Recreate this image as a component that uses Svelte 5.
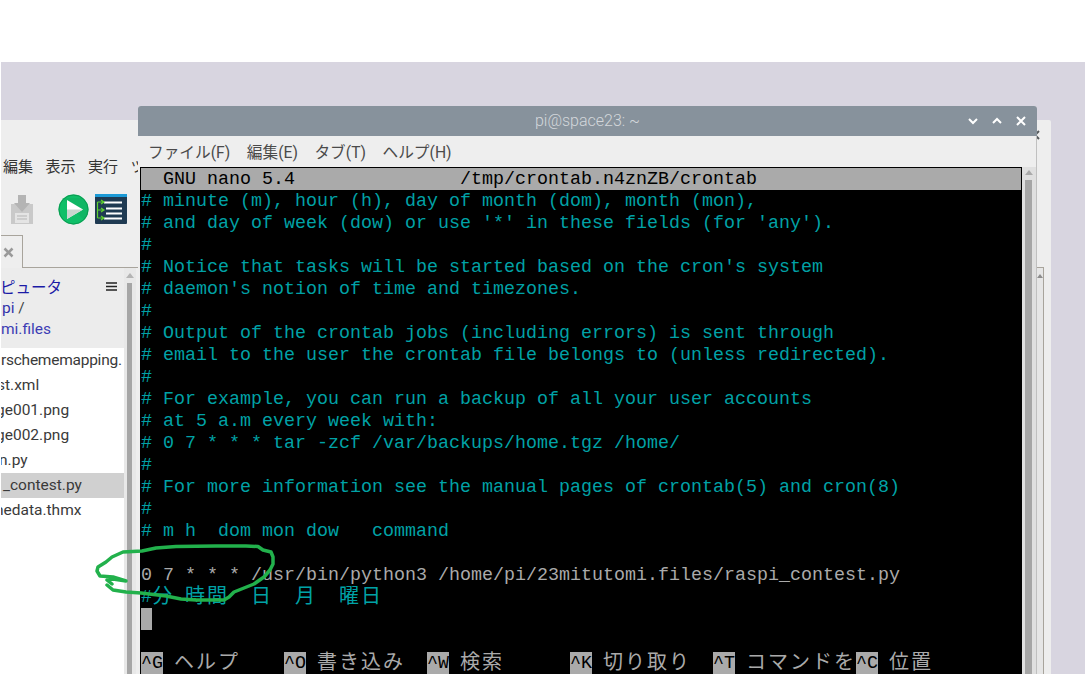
<script>
  const nanoTitle = "  GNU nano 5.4               /tmp/crontab.n4znZB/crontab";
  const comments = [
    "# minute (m), hour (h), day of month (dom), month (mon),",
    "# and day of week (dow) or use '*' in these fields (for 'any').",
    "#",
    "# Notice that tasks will be started based on the cron's system",
    "# daemon's notion of time and timezones.",
    "#",
    "# Output of the crontab jobs (including errors) is sent through",
    "# email to the user the crontab file belongs to (unless redirected).",
    "#",
    "# For example, you can run a backup of all your user accounts",
    "# at 5 a.m every week with:",
    "# 0 7 * * * tar -zcf /var/backups/home.tgz /home/",
    "#",
    "# For more information see the manual pages of crontab(5) and cron(8)",
    "#",
    "# m h  dom mon dow   command"
  ];
  const files = [
    { name: "rschememapping.", sel: false, shift: 0, track: -0.25 },
    { name: "st.xml", sel: false, shift: -4, track: 0 },
    { name: "ge001.png", sel: false, shift: -5, track: 0 },
    { name: "ge002.png", sel: false, shift: -5, track: 0 },
    { name: "n.py", sel: false, shift: -2, track: 0 },
    { name: "_contest.py", sel: true, shift: 2, track: 0 },
    { name: "hedata.thmx", sel: false, shift: -6, track: 0 }
  ];
  const help = [
    { key: "^G", label: "ヘルプ", gap: "    " },
    { key: "^O", label: "書き込み", gap: "  " },
    { key: "^W", label: "検索", gap: "      " },
    { key: "^K", label: "切り取り", gap: "  " },
    { key: "^T", label: "コマンドを", gap: "" },
    { key: "^C", label: "位置", gap: "" }
  ];
</script>

<div class="page">
  <div class="desktop">
    <section class="backwin">
      <svg class="backclose" width="10" height="10" viewBox="0 0 10 10"><path d="M1 1l8 8M9 1l-8 8" fill="none" stroke="#55595c" stroke-width="2"/></svg>
      <nav class="backmenu"><span>編集</span><span>表示</span><span>実行</span><span>ツ</span></nav>
      <div class="tools">
        <svg class="save" width="24" height="31" viewBox="0 0 24 31">
          <path d="M1 10h5v-1l3 3h6l3-3v1h5v20H1z" fill="#c9c9c9"/>
          <path d="M5 19h14v10H5z" fill="#e4e4e4"/>
          <path d="M7 22h10M7 25h10" stroke="#b5b5b5"/>
          <path d="M8 1h8v8h4l-8 9-8-9h4z" fill="#b4b4b4"/>
        </svg>
        <svg class="play" width="31" height="31" viewBox="0 0 31 31">
          <circle cx="15.500" cy="15.500" r="15" fill="#0fbf68"/>
          <path d="M24 4A15 15 0 0 1 26 26L4 4z" fill="#12ad60" opacity=".5"/>
          <circle cx="15.500" cy="15.500" r="14.500" fill="none" stroke="#0a9a50"/>
          <path d="M9 6l16 9.500L9 25z" fill="#fff"/>
          <path d="M9 15.500h16L9 25z" fill="#c9d6cf"/>
        </svg>
        <svg class="code" width="32" height="30" viewBox="0 0 32 30">
          <rect width="32" height="30" rx="1" fill="#1f3a52"/>
          <rect width="32" height="3" fill="#1c9ad6"/>
          <path d="M9 8.500h18M11 14.500h16M11 19.500h16M9 24.500h18" stroke="#fff" stroke-width="2"/>
          <path d="M2.500 8v16M2.500 8h6M2.500 16h6M2.500 24h6M6 6l3 2-3 2M6 14l3 2-3 2M6 22l3 2-3 2" fill="none" stroke="#5fd02f" stroke-width="1.200"/>
        </svg>
      </div>
      <div class="tabs"><div class="tab"><svg width="11" height="11" viewBox="0 0 11 11"><path d="M1.500 1.500l8 8M9.500 1.500l-8 8" fill="none" stroke="#9a9a9a" stroke-width="2.500"/></svg></div></div>
      <div class="panes">
        <div class="sidepane">
          <div class="filelist">
            <header class="path">
              <div class="pathtop">
                <span class="place">ピュータ</span>
                <svg width="11" height="9" viewBox="0 0 11 9"><path d="M0 1h11M0 4.500h11M0 8h11" stroke="#222" stroke-width="1.500"/></svg>
              </div>
              <div class="crumb">pi <span class="slash">/</span></div>
              <div class="crumb folder">mi.files</div>
            </header>
            {#each files as f}
              <div class="file" class:sel={f.sel} style="text-indent: {f.shift}px; letter-spacing: {f.track}px">{f.name}</div>
            {/each}
          </div>
          <div class="sidescroll"><i class="arrow"></i><b class="thumb"></b></div>
        </div>
        <div class="editorpane"></div>
        <div class="farscroll"><i class="fararrow"></i></div>
      </div>
    </section>

    <section class="term">
      <header class="titlebar">
        <span class="title">pi@space23: ~</span>
        <div class="winbtns">
          <svg width="12" height="12" viewBox="0 0 12 12"><path d="M2 4l4 4 4-4" fill="none" stroke="#fff" stroke-width="2"/></svg>
          <svg width="12" height="12" viewBox="0 0 12 12"><path d="M2 8l4-4 4 4" fill="none" stroke="#fff" stroke-width="2"/></svg>
          <svg width="12" height="12" viewBox="0 0 12 12"><path d="M2 2l8 8M10 2l-8 8" fill="none" stroke="#fff" stroke-width="2"/></svg>
        </div>
      </header>
      <nav class="termmenu">
        <span>ファイル(F)</span><span>編集(E)</span><span>タブ(T)</span><span>ヘルプ(H)</span>
      </nav>
      <div class="termbody">
        <div class="screen">
          <div class="row nano">{nanoTitle}</div>
          {#each comments as line}
            <div class="row teal">{line}</div>
          {/each}
          <div class="row"></div>
          <div class="row plain">0 7 * * * /usr/bin/python3 /home/pi/23mitutomi.files/raspi_contest.py</div>
          <div class="row teal">#<span class="wide">分</span>{" "}<span class="wide">時間</span>{"  "}<span class="wide">日</span>{"  "}<span class="wide">月</span>{"  "}<span class="wide">曜日</span></div>
          <div class="row"><span class="cursor"></span></div>
          <div class="row"></div>
          <div class="row light">{#each help as h}<span class="key">{h.key}</span>{" "}<span class="wide">{h.label}</span>{h.gap}{/each}</div>
        </div>
        <div class="termscroll"><i class="arrow"></i><b class="thumb"></b></div>
      </div>
    </section>

    <svg class="scribble" width="300" height="80" viewBox="0 0 300 80">
      <path d="M16 38 L11 34 L17 33 L30 35 L17 31 L4 30 L1 25 L2 21 L10 16 L16 11 L27 6 L46 5 L60 2 L80 0.500 L120 0 L150 0 L162 0.500 L167 4 L175 6 L177 11 L177 18 L174 24 L168 31 L158 38 L148 42 L138 46 L133 51 L128 54 L100 54 L85 53 L70 50 L45 47 L30 46 L17 44 L11 39" transform="translate(0 5)" fill="none" stroke="#22b14c" stroke-width="3.500" stroke-linejoin="round" stroke-linecap="round"/>
    </svg>
  </div>
</div>

<style>
  :global(body) { margin: 0; background: #fff; }
  .page {
    width: 1085px;
    height: 674px;
    padding-top: 62px;
    padding-left: 1px;
    box-sizing: border-box;
    overflow: hidden;
    background: #fff;
  }
  .desktop {
    position: relative;
    width: 1084px;
    height: 612px;
    background: #d8d5e0;
    overflow: hidden;
  }
  .backwin {
    position: absolute;
    left: 0;
    top: 58px;
    width: 1050px;
    height: 560px;
    background: #eeeeee;
    border-top-right-radius: 2px;
    display: flex;
    flex-direction: column;
    font-family: "Noto Sans CJK JP", "Noto Sans", sans-serif;
  }
  .backclose { position: absolute; left: 1029px; top: 10px; }
  .backmenu {
    height: 60px;
    box-sizing: border-box;
    padding: 35px 0 0 2px;
    display: flex;
    gap: 12.500px;
    font-size: 15px;
    line-height: 21px;
    color: #333;
    white-space: nowrap;
  }
  .tools {
    height: 55px;
    box-sizing: border-box;
    display: flex;
    align-items: flex-start;
    padding-top: 14px;
  }
  .save { margin-left: 9px; }
  .play { margin-left: 24px; }
  .code { margin-left: 6px; }
  .tabs { height: 33px; display: flex; flex: none; }
  .tab {
    width: 22px;
    height: 33px;
    box-sizing: border-box;
    border: 1px solid #a8a49c;
    border-left: 0;
    border-bottom: 0;
    background: #eeeeee;
    display: flex;
    align-items: center;
    padding-left: 2px;
    position: relative;
    z-index: 1;
  }
  .panes {
    flex: 1;
    display: flex;
    border-top: 1px solid #a8a49c;
    border-right: 1px solid #a8a49c;
    margin: -1px 7px 0 0;
    min-height: 0;
  }
  .sidepane { width: 135px; display: flex; flex: none; }
  .filelist { width: 123px; background: #fff; overflow: hidden; }
  .path {
    height: 80px;
    box-sizing: border-box;
    background: #ececec;
    padding-top: 6px;
  }
  .pathtop {
    display: flex;
    justify-content: space-between;
    align-items: center;
    padding: 0 7px 0 0;
    height: 24px;
    line-height: 24px;
    font-size: 15.500px;
    color: #1b1ba6;
  }
  .place { margin-left: -1px; }
  .crumb {
    font: 15.500px/21px Roboto, sans-serif;
    color: #3333aa;
    height: 21px;
    padding-left: 1px;
  }
  .slash { color: #444; }
  .crumb.folder { color: #3c3cb4; padding-left: 0; }
  .file {
    height: 25px;
    font: 15.500px/25px Roboto, sans-serif;
    color: #3a3a3a;
    white-space: nowrap;
  }
  .file.sel { background: #d0d0d0; }
  .sidescroll {
    width: 12px;
    background: #e8e8e8;
    padding-left: 3px;
    box-sizing: border-box;
  }
  .sidescroll .arrow {
    display: block;
    width: 0;
    height: 0;
    margin: 5px 0 0 -1px;
    border: 4px solid transparent;
    border-top: 0;
    border-bottom: 5px solid #b4b4b4;
  }
  .sidescroll .thumb { display: block; width: 5px; height: 400px; margin-top: 5px; background: #a6a6a6; }
  .editorpane { flex: 1; }
  .farscroll { width: 7px; background: #e6e6e6; padding: 6px 0 0 1px; box-sizing: border-box; }
  .fararrow {
    display: block;
    width: 0;
    height: 0;
    border: 3px solid transparent;
    border-top: 0;
    border-bottom: 4px solid #8c8c8c;
  }
  .term {
    position: absolute;
    left: 137px;
    top: 44px;
    width: 899px;
    height: 590px;
    background: #eeeeee;
    border-radius: 3px 3px 0 0;
    display: flex;
    flex-direction: column;
    overflow: hidden;
  }
  .titlebar {
    height: 30px;
    flex: none;
    position: relative;
    background: #87929c;
    text-align: center;
    font: 300 16px/30px Roboto, "Liberation Sans", sans-serif;
    color: #d3d7db;
  }
  .winbtns {
    position: absolute;
    right: 10px;
    top: 9px;
    display: flex;
    gap: 12px;
  }
  .winbtns svg { display: block; }
  .termmenu {
    height: 31px;
    flex: none;
    box-sizing: border-box;
    padding: 2px 0 0 10px;
    border-right: 1px solid #c0c0c0;
    display: flex;
    gap: 16.500px;
    align-items: center;
    font: 15.700px/29px Roboto, "Noto Sans CJK JP", sans-serif;
    color: #4a4a4a;
    white-space: nowrap;
  }
  .termbody {
    flex: 1;
    display: flex;
    padding-left: 2px;
    min-height: 0;
    border-right: 1px solid #c0c0c0;
  }
  .screen {
    width: 882px;
    flex: none;
    background: #000;
    padding: 1px 0 0 1px;
    box-sizing: border-box;
    font: 18.330px/24px "Liberation Mono", "Noto Sans CJK JP", monospace;
    overflow: hidden;
  }
  .row { height: 22px; white-space: pre; color: #aaa; }
  .nano { background: #aaaaaa; color: #000; width: 880px; }
  .teal { color: #00a2a6; }
  .plain { color: #aaaaaa; }
  .light { color: #aaaaaa; }
  .wide {
    font-family: "Noto Sans CJK JP", sans-serif;
    font-size: 20px;
    letter-spacing: 2px;
    vertical-align: -1px;
    line-height: 0;
  }
  .key { background: #aaaaaa; color: #000; padding-top: 1px; }
  .cursor { display: block; width: 11px; height: 22px; background: #aaaaaa; }
  .termscroll {
    width: 14px;
    flex: none;
    box-sizing: border-box;
    background: #e0e0e0;
    padding-left: 3px;
  }
  .termscroll .arrow {
    display: block;
    width: 0;
    height: 0;
    margin: 3px 0 0 0;
    border: 4.500px solid transparent;
    border-top: 0;
    border-bottom: 5px solid #aaa;
  }
  .termscroll .thumb { display: block; width: 7px; height: 560px; margin-top: 5px; background: #a6a6a6; }
  .scribble { position: absolute; left: 95px; top: 479px; overflow: visible; }
</style>
